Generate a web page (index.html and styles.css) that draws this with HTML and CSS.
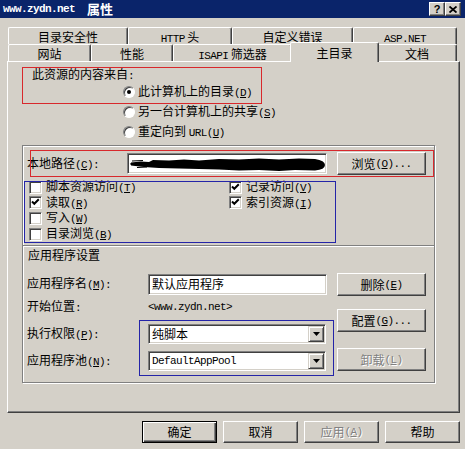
FILE: index.html
```html
<!DOCTYPE html>
<html lang="zh-CN">
<head>
<meta charset="utf-8">
<title>www.zydn.net 属性</title>
<link rel="stylesheet" href="styles.css">
</head>
<body>
<div class="dialog">
  <div class="titlebar">
    <div class="title"><span class="tm">www.zydn.net</span><span class="tz">属性</span></div>
    <div class="capbtns">
      <span class="capbtn help">?</span>
      <span class="capbtn close"><svg width="8" height="7" viewBox="0 0 8 7"><path d="M0.5 0.5 L7.5 6.5 M7.5 0.5 L0.5 6.5" stroke="#000" stroke-width="1.8" fill="none"/></svg></span>
    </div>
  </div>

  <div class="tabs">
    <div class="tabrow">
      <div class="tab w120">目录安全性</div>
      <div class="tab w104"><span class="m">HTTP</span> 头</div>
      <div class="tab w121">自定义错误</div>
      <div class="tab w104"><span class="m">ASP.NET</span></div>
    </div>
    <div class="tabrow">
      <div class="tab w83">网站</div>
      <div class="tab w82">性能</div>
      <div class="tab w119"><span class="m">ISAPI</span> 筛选器</div>
      <div class="tab sel">主目录</div>
      <div class="tab w80">文档</div>
    </div>
  </div>

  <div class="panel">
    <div class="src-label">此资源的内容来自<span class="m">:</span></div>
    <div class="radio-row"><span class="radio on"></span><span>此计算机上的目录<span class="m">(<u>D</u>)</span></span></div>
    <div class="radio-row"><span class="radio"></span><span>另一台计算机上的共享<span class="m">(<u>S</u>)</span></span></div>
    <div class="radio-row last"><span class="radio"></span><span>重定向到 <span class="m">URL(<u>U</u>)</span></span></div>

    <div class="group">
      <div class="path-row">
        <span class="path-lbl">本地路径<span class="m">(<u>C</u>):</span></span>
        <div class="field path-field">
          <svg class="scribble" width="197" height="18" viewBox="0 0 197 18">
            <path d="M2 7.5 L12 6.5 L20 7 L24 5 L40 5.5 L55 4.5 L70 5.5 L90 4 L110 4.5 L130 3.5 L150 4.5 L170 3.5 L186 4 Q196 5.5 196 10 Q196 14.5 186 15.5 L166 15 L150 16 L130 15 L110 15.5 L90 14.5 L70 14 L50 13.5 L30 13 L15 12 L2 10.5 Z" fill="#000"/>
            <path d="M1 9 L9 8 M3 6 L14 5.5 M8 12.5 L18 12" stroke="#000" stroke-width="1.2" fill="none"/>
          </svg>
        </div>
        <div class="btn browse">浏览<span class="m">(<u>O</u>)...</span></div>
      </div>

      <div class="checks">
        <div class="chk"><span class="box"></span><span>脚本资源访问<span class="m">(<u>T</u>)</span></span></div>
        <div class="chk"><span class="box"><svg width="11" height="11" viewBox="0 0 11 11"><path d="M2 4.5 L4.3 6.8 L8.8 2.3" stroke="#000" stroke-width="2" fill="none"/></svg></span><span>记录访问<span class="m">(<u>V</u>)</span></span></div>
        <div class="chk"><span class="box"><svg width="11" height="11" viewBox="0 0 11 11"><path d="M2 4.5 L4.3 6.8 L8.8 2.3" stroke="#000" stroke-width="2" fill="none"/></svg></span><span>读取<span class="m">(<u>R</u>)</span></span></div>
        <div class="chk"><span class="box"><svg width="11" height="11" viewBox="0 0 11 11"><path d="M2 4.5 L4.3 6.8 L8.8 2.3" stroke="#000" stroke-width="2" fill="none"/></svg></span><span>索引资源<span class="m">(<u>I</u>)</span></span></div>
        <div class="chk"><span class="box"></span><span>写入<span class="m">(<u>W</u>)</span></span></div>
        <div></div>
        <div class="chk"><span class="box"></span><span>目录浏览<span class="m">(<u>B</u>)</span></span></div>
      </div>

      <div class="sep"></div>
      <div class="sect">应用程序设置</div>

      <div class="app">
        <div class="app-left">
          <div class="arow r-name"><span class="lbl">应用程序名<span class="m">(<u>M</u>):</span></span><div class="field name-field">默认应用程序</div></div>
          <div class="arow r-start"><span class="lbl">开始位置<span class="m">:</span></span><span class="m">&lt;www.zydn.net&gt;</span></div>
          <div class="arow r-exec"><span class="lbl">执行权限<span class="m">(<u>P</u>):</span></span>
            <div class="field select"><span class="sv">纯脚本</span><span class="dd"><svg width="7" height="4" viewBox="0 0 7 4"><path d="M0 0 H7 L3.5 4 Z" fill="#000"/></svg></span></div>
          </div>
          <div class="arow r-pool"><span class="lbl">应用程序池<span class="m">(<u>N</u>):</span></span>
            <div class="field select"><span class="sv m">DefaultAppPool</span><span class="dd"><svg width="7" height="4" viewBox="0 0 7 4"><path d="M0 0 H7 L3.5 4 Z" fill="#000"/></svg></span></div>
          </div>
        </div>
        <div class="app-btns">
          <div class="btn abtn">删除<span class="m">(<u>E</u>)</span></div>
          <div class="btn abtn cfg">配置<span class="m">(<u>G</u>)...</span></div>
          <div class="btn abtn unload dis">卸载<span class="m">(<u>L</u>)</span></div>
        </div>
      </div>
    </div>
  </div>

  <div class="footer">
    <div class="btn fbtn def">确定</div>
    <div class="btn fbtn">取消</div>
    <div class="btn fbtn dis">应用<span class="m">(<u>A</u>)</span></div>
    <div class="btn fbtn">帮助</div>
  </div>

  <div class="mark red red1"></div>
  <div class="mark red red2"></div>
  <div class="mark blue blue1"></div>
  <div class="mark blue blue2"></div>
</div>
</body>
</html>
```

FILE: styles.css
```css
* { box-sizing: border-box; }
html, body { margin: 0; padding: 0; }
body {
  width: 465px;
  height: 449px;
  overflow: hidden;
  background: #d4d0c8;
  color: #000;
  font-family: "Noto Sans CJK SC", "Noto Sans", sans-serif;
  font-size: 12px;
  line-height: 16px;
}
.dialog { position: relative; width: 465px; height: 449px; }

.m {
  font-family: "Liberation Mono", "Noto Sans CJK SC", monospace;
  font-size: 11px;
  letter-spacing: -0.6px;
}

/* title bar */
.titlebar {
  height: 18px;
  background: #0a246a;
  color: #fff;
  display: flex;
  align-items: center;
  justify-content: space-between;
  padding: 0 4px 0 3px;
}
.title { display: flex; align-items: center; font-weight: bold; }
.tm { font-family: "Liberation Mono", monospace; font-size: 11px; letter-spacing: -0.6px; font-weight: bold; }
.tz { font-size: 13px; margin-left: 12px; }
.capbtns { display: flex; }
.capbtn {
  width: 16px;
  height: 14px;
  background: #d4d0c8;
  border: 1px solid;
  border-color: #fff #404040 #404040 #fff;
  box-shadow: inset -1px -1px #808080;
  color: #000;
  display: flex;
  align-items: center;
  justify-content: center;
  font-family: "Liberation Sans", sans-serif;
  font-weight: bold;
  font-size: 11px;
  line-height: 12px;
}

/* tabs */
.tabs { margin: 9px 0 0 8px; width: 449px; }
.tabrow { display: flex; height: 17px; }
.tab {
  height: 17px;
  border-left: 1px solid #fff;
  border-top: 1px solid #fff;
  border-right: 1px solid #404040;
  box-shadow: inset -1px 0 #808080;
  border-radius: 2px 2px 0 0;
  text-align: center;
  white-space: nowrap;
  padding-top: 1px;
  line-height: 15px;
  background: #d4d0c8;
}
.w120 { width: 120px; }
.w104 { width: 104px; }
.w121 { width: 121px; }
.w83 { width: 83px; }
.w82 { width: 82px; }
.w119 { width: 119px; }
.w80 { width: 80px; }
.tab.sel {
  width: 89px;
  height: 20px;
  margin: -2px -2px 0;
  position: relative;
  z-index: 2;
  padding-top: 2px;
  line-height: 16px;
}

/* panel */
.panel {
  margin-left: 7px;
  width: 453px;
  height: 352px;
  border: 1px solid;
  border-color: #fff #404040 #404040 #fff;
  box-shadow: inset -1px -1px #808080;
  padding-top: 4px;
}
.src-label { margin-left: 24px; height: 16px; }
.radio-row { display: flex; align-items: center; gap: 3px; margin-left: 115px; height: 20px; }
.radio-row.last { height: 19px; }
.radio {
  width: 12px;
  height: 12px;
  border-radius: 50%;
  border: 1px solid;
  border-color: #808080 #fff #fff #808080;
  box-shadow: inset 1px 1px #404040;
  background: #fff;
  display: flex;
  align-items: center;
  justify-content: center;
}
.radio.on::after {
  content: "";
  width: 4px;
  height: 4px;
  border-radius: 50%;
  background: #000;
}

.group {
  margin: 4px 0 0 14px;
  width: 413px;
  height: 238px;
  border: 1px solid #808080;
  box-shadow: inset 1px 1px #fff, 1px 1px #fff;
  padding-top: 6px;
}

.field {
  background: #fff;
  border: 1px solid;
  border-color: #808080 #fff #fff #808080;
  box-shadow: inset 1px 1px #404040, inset -1px -1px #d4d0c8;
  display: flex;
  align-items: center;
  padding-left: 3px;
  white-space: nowrap;
}

.path-row { display: flex; align-items: center; height: 23px; margin-left: 4px; }
.path-lbl { width: 100px; white-space: nowrap; }
.path-field { width: 200px; height: 21px; padding: 1px 0 0 1px; }
.scribble { display: block; }

.btn {
  display: flex;
  align-items: center;
  justify-content: center;
  background: #d4d0c8;
  border: 1px solid;
  border-color: #fff #404040 #404040 #fff;
  box-shadow: inset -1px -1px #808080;
  white-space: nowrap;
}
.btn.def {
  border-color: #000;
  box-shadow: inset 1px 1px #fff, inset -1px -1px #404040, inset -2px -2px #808080;
}
.btn.dis { color: #808080; text-shadow: 1px 1px #fff; }
.browse { margin-left: 10px; width: 89px; height: 23px; }

.checks {
  display: grid;
  grid-template-columns: 200px 200px;
  grid-template-rows: 16px 15px 16px 16px;
  margin: 4px 0 0 6px;
}
.chk { display: flex; align-items: center; gap: 4px; white-space: nowrap; }
.box {
  width: 13px;
  height: 13px;
  flex: none;
  background: #fff;
  border: 1px solid;
  border-color: #808080 #fff #fff #808080;
  box-shadow: inset 1px 1px #404040, inset -1px -1px #d4d0c8;
}
.box svg { display: block; }

.sep { margin-top: 3px; height: 2px; border-top: 1px solid #808080; border-bottom: 1px solid #fff; }
.sect { margin-left: 5px; height: 16px; }

.app { display: flex; margin: 10px 0 0 4px; }
.app-left { width: 300px; }
.arow { display: flex; align-items: center; }
.lbl { width: 121px; white-space: nowrap; }
.r-name { height: 22px; }
.name-field { width: 179px; height: 21px; }
.r-start { height: 24px; }
.r-exec { height: 20px; margin-top: 5px; }
.r-pool { height: 20px; margin-top: 7px; }
.select { width: 178px; height: 20px; padding: 1px 1px 1px 3px; }
.sv { flex: 1; }
.dd {
  width: 16px;
  height: 16px;
  background: #d4d0c8;
  border: 1px solid;
  border-color: #d4d0c8 #404040 #404040 #d4d0c8;
  box-shadow: inset 1px 1px #fff, inset -1px -1px #808080;
  display: flex;
  align-items: center;
  justify-content: center;
}
.dd svg { display: block; }

.app-btns { display: flex; flex-direction: column; margin-left: 10px; }
.abtn { width: 89px; height: 23px; }
.cfg { margin-top: 13px; }
.unload { margin-top: 16px; }

.footer { display: flex; justify-content: flex-end; gap: 6px; padding-right: 5px; margin-top: 8px; }
.fbtn { width: 75px; height: 22px; }

/* annotation boxes drawn over the screenshot */
.mark { position: absolute; border: 1px solid; pointer-events: none; }
.red { border-color: #d8282c; }
.blue { border-color: #2424a8; }
.red1 { left: 22px; top: 67px; width: 240px; height: 37px; }
.red2 { left: 30px; top: 150px; width: 404px; height: 27px; }
.blue1 { left: 24px; top: 181px; width: 312px; height: 62px; }
.blue2 { left: 139px; top: 320px; width: 195px; height: 56px; }
```
